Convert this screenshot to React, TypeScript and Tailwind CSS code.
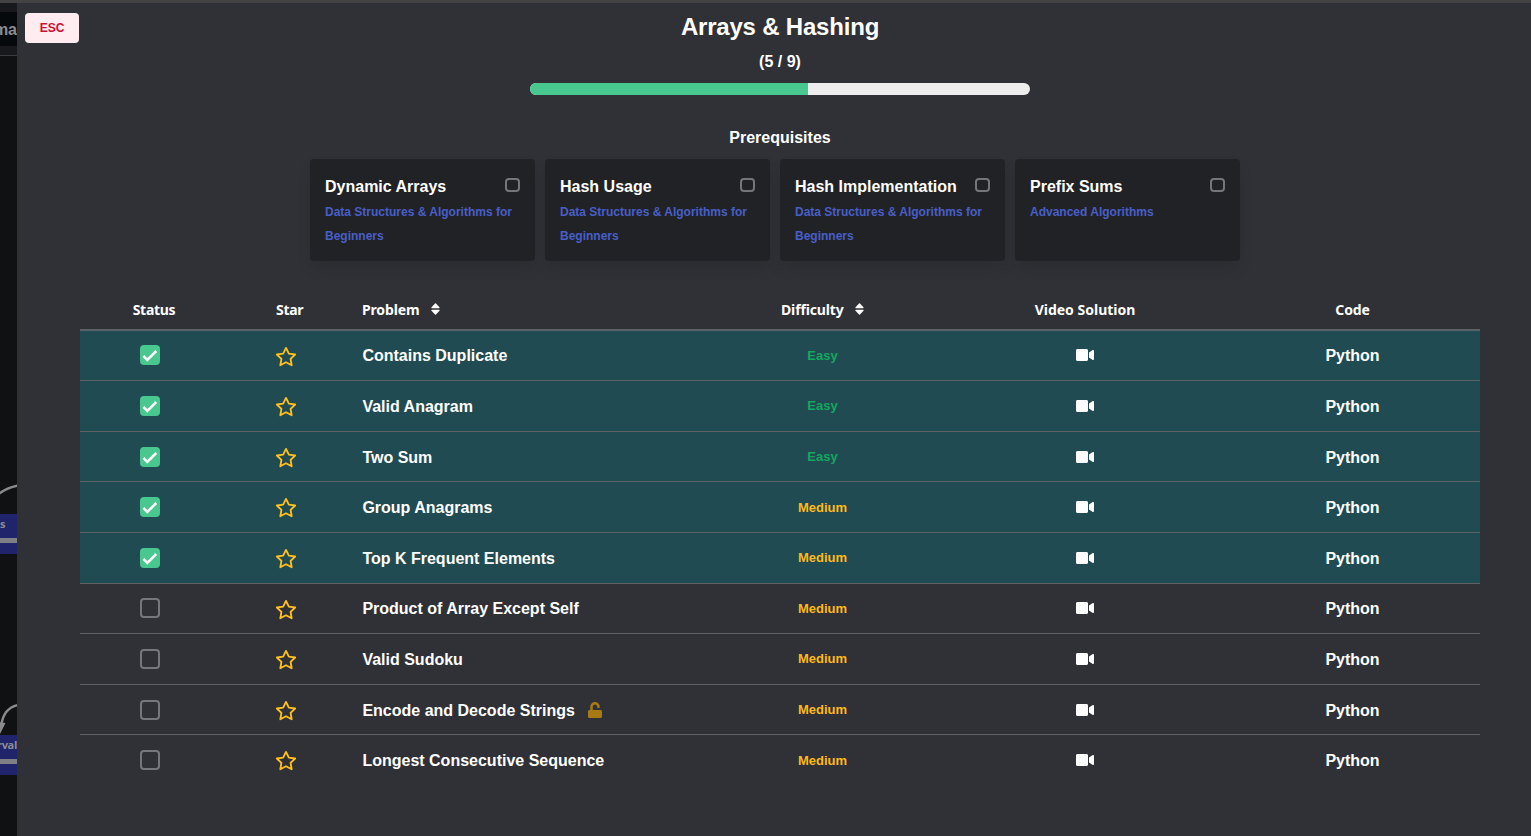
import { FaUnlock, FaVideo } from "react-icons/fa";
import { FiStar } from "react-icons/fi";

const DSA = "Data Structures & Algorithms for Beginners";

const prerequisites = [
  { name: "Dynamic Arrays", course: DSA },
  { name: "Hash Usage", course: DSA },
  { name: "Hash Implementation", course: DSA },
  { name: "Prefix Sums", course: "Advanced Algorithms" },
];

type Problem = {
  name: string;
  level: "Easy" | "Medium";
  done?: boolean;
  unlocked?: boolean;
  height: string;
  offset: string;
  levelOffset: string;
};

const problems: Problem[] = [
  { name: "Contains Duplicate", level: "Easy", done: true, height: "h-[50px]", offset: "pt-3", levelOffset: "pt-[13px]" },
  { name: "Valid Anagram", level: "Easy", done: true, height: "h-[51px]", offset: "pt-[13px]", levelOffset: "pt-[13px]" },
  { name: "Two Sum", level: "Easy", done: true, height: "h-[50px]", offset: "pt-[13px]", levelOffset: "pt-[13px]" },
  { name: "Group Anagrams", level: "Medium", done: true, height: "h-[51px]", offset: "pt-[13px]", levelOffset: "pt-[14px]" },
  { name: "Top K Frequent Elements", level: "Medium", done: true, height: "h-[51px]", offset: "pt-[13px]", levelOffset: "pt-[13px]" },
  { name: "Product of Array Except Self", level: "Medium", height: "h-[50px]", offset: "pt-3", levelOffset: "pt-[13px]" },
  { name: "Valid Sudoku", level: "Medium", height: "h-[51px]", offset: "pt-[13px]", levelOffset: "pt-[13px]" },
  { name: "Encode and Decode Strings", level: "Medium", unlocked: true, height: "h-[50px]", offset: "pt-[13px]", levelOffset: "pt-[13px]" },
  { name: "Longest Consecutive Sequence", level: "Medium", height: "h-[51px]", offset: "pt-[13px]", levelOffset: "pt-[14px]" },
];

const COLUMNS = "grid grid-cols-[140px_142px_329px_263px_262px_264px]";

function SortIcon() {
  return (
    <svg width="9" height="12" viewBox="0 0 9 12" fill="#fff" className="-mt-0.5">
      <path d="M4 .4Q4.5 0 5 .4L8.5 4.2Q8.9 5.1 8.1 5.3H.9Q.1 5.1.5 4.2Z" />
      <path d="M4 11.6Q4.5 12 5 11.6L8.5 7.8Q8.9 6.9 8.1 6.7H.9Q.1 6.9.5 7.8Z" />
    </svg>
  );
}

function Checkbox({ checked }: { checked?: boolean }) {
  if (!checked) return <span className="size-5 rounded-[4px] border-2 border-[#76777b]" />;
  return (
    <span className="size-5 rounded-[4px] bg-[#48c78e]">
      <svg viewBox="0 0 20 20" fill="none" stroke="#fff" strokeWidth="2.5">
        <path d="M3.4 10.8 7.3 15 16.2 6" />
      </svg>
    </span>
  );
}

function Roadmap() {
  return (
    <aside className="relative w-[17px] shrink-0 overflow-hidden bg-[#101113] text-[#8b8d90]">
      <div className="absolute inset-x-0 top-0 h-[53px] border-b border-[#3a3b3d] bg-[#17191c]" />
      <div className="absolute inset-x-0 top-[9px] h-[34px] bg-[#06090c]" />
      <span className="absolute right-0 top-[17px] text-base leading-5 font-bold">ma</span>
      <svg className="absolute left-0 top-[478px]" width="17" height="20" fill="none" stroke="#8a8a8a" strokeWidth="2.5">
        <path d="M-2 13.5Q6 7 18 4.500" />
      </svg>
      <div className="absolute inset-x-0 top-[511px] h-[40px] bg-[#20246b]">
        <span className="absolute left-0 top-[2px] font-['Open_Sans',sans-serif] text-[11px] leading-4 font-bold">s</span>
        <div className="absolute inset-x-0 top-[24px] h-[5px] bg-[#7f8085]" />
      </div>
      <svg className="absolute left-0 top-[697px]" width="17" height="36" fill="none" stroke="#8a8a8a" strokeWidth="2.5">
        <path d="M18 5Q4 8 1.500 24" />
        <path d="M-3 22 5.500 23 0 34Z" fill="#8a8a8a" stroke="none" />
      </svg>
      <div className="absolute inset-x-0 top-[732px] h-[40px] bg-[#20246b]">
        <span className="absolute right-0 top-[2px] font-['Open_Sans',sans-serif] text-[11px] leading-4 font-bold tracking-[-0.3px]">rval</span>
        <div className="absolute inset-x-0 top-[24px] h-[5px] bg-[#7f8085]" />
      </div>
    </aside>
  );
}

export default function App() {
  return (
    <div className="flex h-[836px] w-[1531px] flex-col overflow-hidden border-t-[3px] border-[#434343] bg-[#303136] font-['Liberation_Sans',Arial,sans-serif] font-bold text-white">
      <div className="flex flex-1">
        <Roadmap />
        <main className="flex flex-1 flex-col">
          <header className="grid h-[92px] grid-cols-[505px_500px] pl-2">
            <button className="mt-2.5 h-[30px] w-[54px] rounded-[4px] bg-[#feecf0] text-xs text-[#cc0f35]">ESC</button>
            <div className="flex flex-col items-center">
              <h1 className="mt-2 text-2xl leading-8 tracking-[-0.2px]">Arrays &amp; Hashing</h1>
              <p className="mt-[7px] text-base leading-6">(5 / 9)</p>
              <div className="mt-[9px] flex h-3 w-full overflow-hidden rounded-full bg-[#ededed]">
                <div className="h-full w-[278px] bg-[#48c78e]" />
              </div>
            </div>
          </header>

          <section className="flex flex-col pl-[293px]">
            <h2 className="mt-[31px] w-[940px] text-center text-base leading-6">Prerequisites</h2>
            <div className="mt-[9px] flex gap-2.5">
              {prerequisites.map((p) => (
                <article key={p.name} className="h-[102px] w-[225px] rounded-[4px] bg-[#212226] px-[15px] pt-4 shadow-[0_8px_16px_-2px_rgba(10,10,10,0.12)]">
                  <div className="flex h-[25px] items-start justify-between">
                    <h3 className="whitespace-nowrap text-base leading-6">{p.name}</h3>
                    <span className="mt-[3px] h-[14px] w-[15px] rounded-[4px] border-2 border-[#75767a]" />
                  </div>
                  <p className="text-xs leading-6 text-[#485fc7]">{p.course}</p>
                </article>
              ))}
            </div>
          </section>

          <section className="mt-[29px] ml-[63px] w-[1400px]">
            <div className={`${COLUMNS} h-[41px] items-center border-b-2 border-[#5c6366] font-['Noto_Sans','Segoe_UI',sans-serif] text-sm tracking-[-0.15px]`}>
              <span className="pl-2 text-center tracking-[-0.3px]">Status</span>
              <span className="pl-14 tracking-[-0.3px]">Star</span>
              <span className="flex items-center gap-3">Problem <SortIcon /></span>
              <span className="flex items-center gap-[11px] pl-[90px]">Difficulty <SortIcon /></span>
              <span className="text-center tracking-normal">Video Solution</span>
              <span className="pl-[9px] text-center">Code</span>
            </div>
            {problems.map((p, i) => (
              <div
                key={p.name}
                className={`${COLUMNS} ${p.height} ${p.done ? "bg-[#214b52]" : ""} ${i < problems.length - 1 ? "border-b border-[#5c6265]" : ""}`}
              >
                <span className={`flex h-fit justify-center ${p.offset}`}>
                  <span className="flex pt-0.5"><Checkbox checked={p.done} /></span>
                </span>
                <span className="pt-[15px] pl-[55px]"><FiStar size={22} color="#ffc01e" strokeWidth={2} /></span>
                <span className={`flex h-fit items-center text-base leading-6 ${p.offset}`}>
                  <span className="pt-px pl-[0.4px]">{p.name}</span>
                  {p.unlocked && <FaUnlock size={16} className="mb-px ml-3 text-[#a87a12]" />}
                </span>
                <span className={`text-center text-[13px] leading-6 ${p.levelOffset} ${p.level === "Easy" ? "text-[#12a85f]" : "text-[#ffb91a]"}`}>{p.level}</span>
                <span className={`flex h-6 justify-center box-content ${p.offset}`}><FaVideo size={18} className="mt-[3px]" /></span>
                <span className={`pl-[9px] text-center text-base leading-6 ${p.offset}`}>
                  <span className="relative top-px">Python</span>
                </span>
              </div>
            ))}
          </section>
        </main>
      </div>
    </div>
  );
}
